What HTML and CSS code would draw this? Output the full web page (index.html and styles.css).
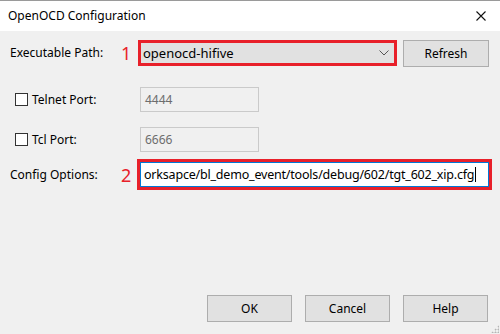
FILE: index.html
```html
<!DOCTYPE html>
<html lang="en">
<head>
    <meta charset="UTF-8">
    <title>OpenOCD Configuration</title>
    <link rel="stylesheet" href="styles.css">
</head>
<body>
    <div class="window">
        <div class="titlebar">
            <span class="title">OpenOCD Configuration</span>
            <svg class="close" width="10" height="10" viewBox="0 0 10 10">
                <path d="M0.5 0.5 L9.5 9.5 M9.5 0.5 L0.5 9.5" stroke="#111" stroke-width="1.1" fill="none"/>
            </svg>
        </div>
        <div class="content">
            <div class="row row-exec">
                <span class="label">Executable Path:</span>
                <span class="num">1</span>
                <div class="mark mark-select">
                    <div class="select">
                        <span>openocd-hifive</span>
                        <svg class="chevron" width="10" height="6" viewBox="0 0 10 6">
                            <path d="M0.5 0.5 L5 5 L9.5 0.5" stroke="#555" stroke-width="1" fill="none"/>
                        </svg>
                    </div>
                </div>
                <button class="btn btn-refresh">Refresh</button>
            </div>

            <div class="row row-port row-telnet">
                <span class="check"></span>
                <span class="check-label">Telnet Port:</span>
                <div class="field">4444</div>
            </div>

            <div class="row row-port row-tcl">
                <span class="check"></span>
                <span class="check-label">Tcl Port:</span>
                <div class="field">6666</div>
            </div>

            <div class="row row-config">
                <span class="label">Config Options:</span>
                <span class="num">2</span>
                <div class="mark mark-config">
                    <div class="edit">
                        <span class="edit-text">orksapce/bl_demo_event/tools/debug/602/tgt_602_xip.cfg</span><span class="caret"></span>
                    </div>
                </div>
            </div>

            <div class="footer">
                <button class="btn">OK</button>
                <button class="btn">Cancel</button>
                <button class="btn">Help</button>
            </div>
            <div class="grip"></div>
        </div>
    </div>
</body>
</html>
```

FILE: styles.css
```css
*{
    margin: 0;
    padding: 0;
    box-sizing: border-box;
}
body{
    font-family: "Noto Sans", "Open Sans", sans-serif;
    font-size: 12px;
    color: #000;
    background: #f0f0f0;
}
.window{
    width: 500px;
    height: 334px;
    display: flex;
    flex-direction: column;
    border-top: 1px solid #9a9a9a;
}
.titlebar{
    height: 30px;
    background: #fff;
    display: flex;
    align-items: center;
    justify-content: space-between;
    padding: 0 14px 0 8px;
}
.title{
    font-size: 12px;
    margin-top: -1px;
}
.content{
    flex: 1;
    background: #f0f0f0;
    position: relative;
    display: flex;
    flex-direction: column;
    padding-top: 7px;
}
.row{
    display: flex;
    align-items: center;
    padding-left: 10px;
}
.label{
    width: 111px;
}
.num{
    width: 17px;
    color: #e8202a;
    font-size: 18px;
    line-height: 18px;
}
.mark{
    border: 3px solid #e8202a;
}
.mark-select{
    width: 259px;
    height: 26px;
}
.select{
    height: 100%;
    background: #e1e1e1;
    display: flex;
    align-items: center;
    justify-content: space-between;
    padding: 0 5px 0 2px;
    font-size: 13px;
}
.chevron{
    margin-top: 1px;
}
.btn{
    width: 86px;
    height: 27px;
    background: #e1e1e1;
    border: 1px solid #adadad;
    font-family: inherit;
    font-size: 12px;
    color: #000;
}
.btn-refresh{
    margin-left: 6px;
    margin-top: 2px;
}
.row-telnet{
    margin-top: 20px;
    padding-left: 15px;
}
.row-tcl{
    margin-top: 15px;
    padding-left: 15px;
}
.check{
    width: 13px;
    height: 13px;
    border: 1px solid #333;
    background: #fff;
}
.check-label{
    width: 112px;
    padding-left: 4px;
}
.field{
    width: 119px;
    height: 25px;
    border: 1px solid #cacaca;
    background: #f0f0f0;
    color: #6d6d6d;
    padding-left: 4px;
    display: flex;
    align-items: center;
    font-size: 12px;
}
.row-config{
    margin-top: 7px;
}
.row-config .num{
    width: 16px;
}
.mark-config{
    width: 355px;
    height: 31px;
}
.edit{
    height: 100%;
    background: #fff;
    border: 1px solid #0078d7;
    display: flex;
    align-items: center;
    padding: 0 6px 0 3px;
    font-size: 12.5px;
    letter-spacing: -0.2px;
    overflow: hidden;
    white-space: nowrap;
}
.caret{
    width: 1px;
    height: 15px;
    background: #000;
    margin-left: 1px;
    flex-shrink: 0;
}
.footer{
    margin-top: auto;
    display: flex;
    justify-content: flex-end;
    gap: 13px;
    padding: 0 12px 12px 0;
}
.footer .btn{
    width: 85px;
}
.grip{
    position: absolute;
    right: 1px;
    bottom: 1px;
    width: 8px;
    height: 8px;
    background:
        radial-gradient(circle, #b5b5b5 0.9px, transparent 1.1px) 0 0 / 3px 3px;
    clip-path: polygon(100% 0, 100% 100%, 0 100%);
}
```
